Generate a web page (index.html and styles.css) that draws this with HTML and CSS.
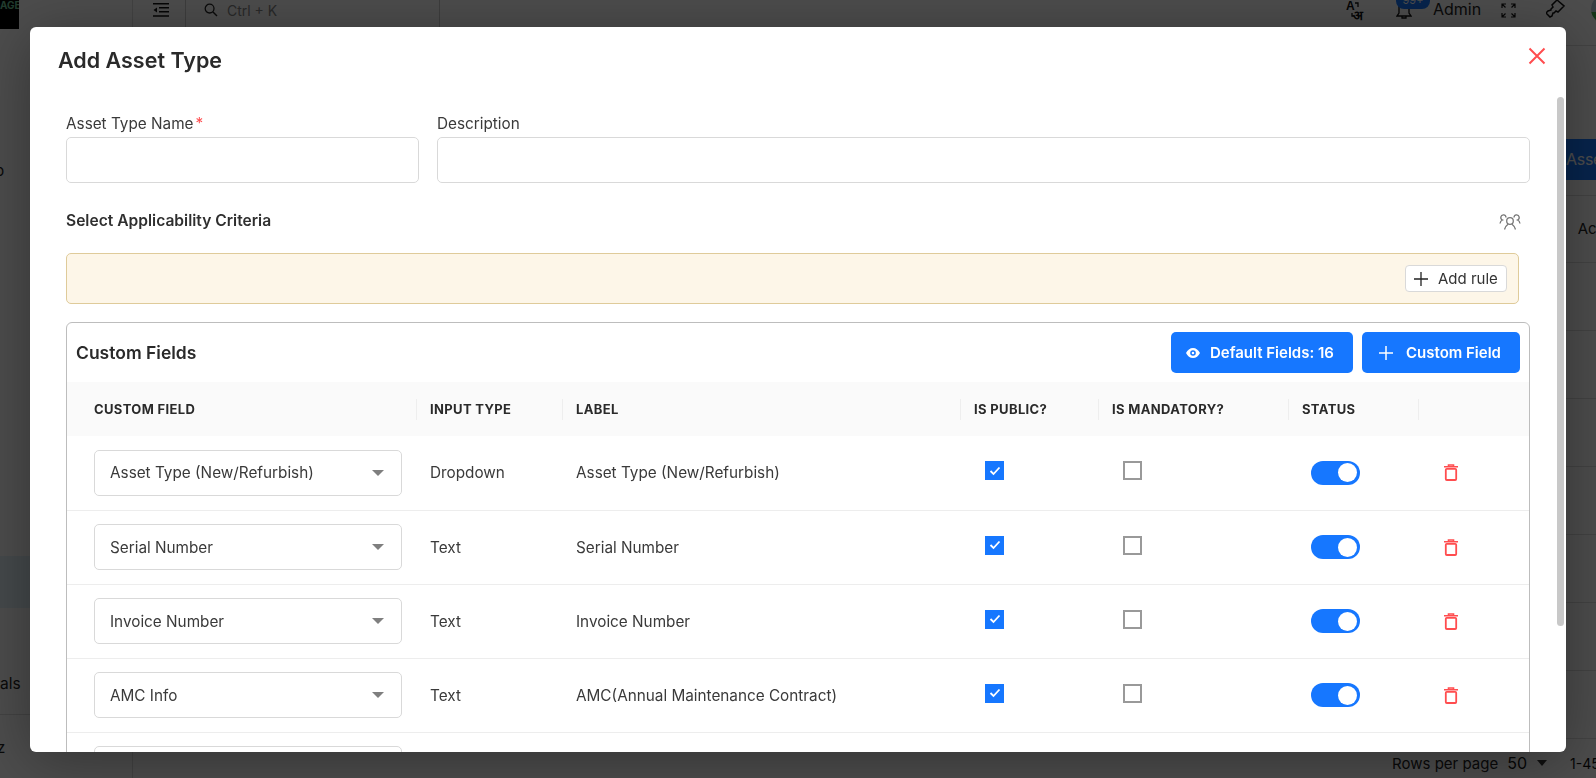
FILE: index.html
```html
<!DOCTYPE html>
<html lang="en">
<head>
<meta charset="utf-8">
<title>Add Asset Type</title>
<link rel="stylesheet" href="styles.css">
</head>
<body>
<div class="app">
  <aside class="sidebar">
    <div class="logo">AGE</div>
    <div class="side-item side-o">p</div>
    <div class="side-active"></div>
    <div class="side-item side-als">als</div>
    <div class="side-item side-z">z</div>
  </aside>
  <div class="main">
    <header class="topbar">
      <div class="menu-cell">
        <svg width="16" height="14" viewBox="0 0 16 14"><path d="M0 .7h16M6 4.7h10M6 8.7h10M0 13h16" stroke="#111" stroke-width="1.4"/><path d="M4 4.400v5L.5 6.900z" fill="#111"/></svg>
      </div>
      <div class="search">
        <svg width="14" height="14" viewBox="0 0 14 14"><circle cx="5.600" cy="5.600" r="4.400" fill="none" stroke="#222" stroke-width="1.300"/><path d="M9 9l4 4" stroke="#222" stroke-width="1.500"/></svg>
        <span>Ctrl + K</span>
      </div>
      <div class="top-right">
        <svg class="ic-lang" width="20" height="21" viewBox="0 0 20 21"><text x="0" y="10" class="lang-a">A</text><text x="7" y="20" class="lang-h">अ</text><path d="M9 3h3v4M6 13v3h2" fill="none" stroke="#111" stroke-width="1.300"/></svg>
        <div class="bell">
          <svg width="16" height="20" viewBox="0 0 16 20"><path d="M3 4v9l-2 3h14l-2-3V4M6 16v2h4v-2" fill="none" stroke="#111" stroke-width="1.300"/></svg>
          <span class="badge">99+</span>
        </div>
        <span class="admin">Admin</span>
        <svg class="ic-full" width="15" height="15" viewBox="0 0 15 15"><path d="M1 5V1h4M10 1h4v4M14 10v4h-4M5 14H1v-4M1 1l3.500 3.500M14 1l-3.500 3.500M14 14l-3.500-3.500M1 14l3.500-3.500" fill="none" stroke="#111" stroke-width="1.200"/></svg>
        <svg class="ic-brush" width="19" height="19" viewBox="0 0 19 19"><path d="M11 0l7 6-6 6-2-1-2 2-1 0-1 3-2 1-4-4 2-2 3-1 0-1 2-2-1-2z" fill="none" stroke="#111" stroke-width="1.500"/></svg>
        <div class="avatar"></div>
      </div>
    </header>
    <div class="content">
      <div class="action-row"><span class="action-btn">Asset</span></div>
      <div class="bg-head">Action</div>
      <div class="bg-row"></div><div class="bg-row"></div><div class="bg-row"></div><div class="bg-row"></div>
      <div class="bg-row"></div><div class="bg-row"></div><div class="bg-row"></div>
    </div>
    <footer class="pager">
      <span class="rows-label">Rows per page</span>
      <span class="rows-val">50</span>
      <i class="pager-caret"></i>
      <span class="rows-range">1-45</span>
    </footer>
  </div>
</div>

<div class="overlay"></div>

<section class="modal">
  <div class="modal-head">
    <h1 class="modal-title">Add Asset Type</h1>
    <svg class="close" width="18" height="18" viewBox="0 0 18 18"><path d="M1.500 1.500l15 15M16.500 1.500l-15 15" stroke="#ff4d4f" stroke-width="2" fill="none"/></svg>
  </div>
  <div class="modal-body">
    <div class="field-row">
      <div class="field field-name">
        <label class="field-label">Asset Type Name<span class="req">*</span></label>
        <div class="input"></div>
      </div>
      <div class="field field-desc">
        <label class="field-label">Description</label>
        <div class="input"></div>
      </div>
    </div>
    <div class="criteria-head">
      <span class="criteria-title">Select Applicability Criteria</span>
      <svg class="people" width="22" height="18" viewBox="0 0 22 18" fill="none" stroke="#777" stroke-width="1.300"><circle cx="11" cy="8" r="3.300"/><path d="M5.500 16.500c.8-3 2.500-4.500 3.500-5.200M16.500 16.500c-.8-3-2.500-4.500-3.500-5.200"/><path d="M1 10.500c.3-2 1.300-3 2.500-3.500a2.600 2.600 0 1 1 3.500-2.500M21 10.500c-.3-2-1.300-3-2.500-3.500a2.600 2.600 0 1 0-3.500-2.500"/></svg>
    </div>
    <div class="rule-box">
      <button class="add-rule" type="button">
        <svg width="14" height="14" viewBox="0 0 14 14"><path d="M7 0v14M0 7h14" stroke="#222" stroke-width="1.300"/></svg>
        <span>Add rule</span>
      </button>
    </div>
    <div class="cf-card">
      <div class="cf-head">
        <h2 class="cf-title">Custom Fields</h2>
        <div class="cf-actions">
          <button class="btn btn-default" type="button">
            <svg width="14" height="10" viewBox="0 0 14 10"><path fill-rule="evenodd" d="M7 0c3 0 5.500 2 7 5-1.500 3-4 5-7 5S1.500 8 0 5c1.500-3 4-5 7-5zm0 2.200a2.800 2.800 0 1 0 0 5.600 2.800 2.800 0 0 0 0-5.600zM7 3.700a1.300 1.300 0 1 1 0 2.600 1.300 1.300 0 0 1 0-2.600z" fill="#fff"/></svg>
            <span>Default Fields: 16</span>
          </button>
          <button class="btn btn-custom" type="button">
            <svg width="14" height="14" viewBox="0 0 14 14"><path d="M7 0v14M0 7h14" stroke="#fff" stroke-width="1.500"/></svg>
            <span>Custom Field</span>
          </button>
        </div>
      </div>
      <table class="cf-table">
        <colgroup>
          <col class="c1"><col class="c2"><col class="c3"><col class="c4"><col class="c5"><col class="c6"><col class="c7">
        </colgroup>
        <thead>
          <tr>
            <th class="th-first"><div>Custom Field</div></th>
            <th><div>Input Type</div></th>
            <th><div>Label</div></th>
            <th><div>Is Public?</div></th>
            <th><div>Is Mandatory?</div></th>
            <th><div>Status</div></th>
            <th><div>&nbsp;</div></th>
          </tr>
        </thead>
        <tbody>
          <tr>
            <td class="td-select"><div class="select"><span>Asset Type (New/Refurbish)</span><i class="caret"></i></div></td>
            <td>Dropdown</td>
            <td>Asset Type (New/Refurbish)</td>
            <td class="td-check"><span class="check on"><svg width="12" height="10" viewBox="0 0 12 10"><path d="M1.500 5l3 3 6-6.500" fill="none" stroke="#fff" stroke-width="1.800"/></svg></span></td>
            <td class="td-check"><span class="check"></span></td>
            <td class="td-toggle"><span class="toggle"><i class="thumb"></i></span></td>
            <td class="td-trash"><svg width="14" height="17" viewBox="0 0 14 17"><path d="M0 2.800h14M4.500 2.500V1h5v1.500" fill="none" stroke="#ff4d4f" stroke-width="1.600"/><rect x="1.800" y="4.800" width="10.400" height="11.200" rx="1" fill="none" stroke="#ff4d4f" stroke-width="1.800"/></svg></td>
          </tr>
          <tr>
            <td class="td-select"><div class="select"><span>Serial Number</span><i class="caret"></i></div></td>
            <td>Text</td>
            <td>Serial Number</td>
            <td class="td-check"><span class="check on"><svg width="12" height="10" viewBox="0 0 12 10"><path d="M1.500 5l3 3 6-6.500" fill="none" stroke="#fff" stroke-width="1.800"/></svg></span></td>
            <td class="td-check"><span class="check"></span></td>
            <td class="td-toggle"><span class="toggle"><i class="thumb"></i></span></td>
            <td class="td-trash"><svg width="14" height="17" viewBox="0 0 14 17"><path d="M0 2.800h14M4.500 2.500V1h5v1.500" fill="none" stroke="#ff4d4f" stroke-width="1.600"/><rect x="1.800" y="4.800" width="10.400" height="11.200" rx="1" fill="none" stroke="#ff4d4f" stroke-width="1.800"/></svg></td>
          </tr>
          <tr>
            <td class="td-select"><div class="select"><span>Invoice Number</span><i class="caret"></i></div></td>
            <td>Text</td>
            <td>Invoice Number</td>
            <td class="td-check"><span class="check on"><svg width="12" height="10" viewBox="0 0 12 10"><path d="M1.500 5l3 3 6-6.500" fill="none" stroke="#fff" stroke-width="1.800"/></svg></span></td>
            <td class="td-check"><span class="check"></span></td>
            <td class="td-toggle"><span class="toggle"><i class="thumb"></i></span></td>
            <td class="td-trash"><svg width="14" height="17" viewBox="0 0 14 17"><path d="M0 2.800h14M4.500 2.500V1h5v1.500" fill="none" stroke="#ff4d4f" stroke-width="1.600"/><rect x="1.800" y="4.800" width="10.400" height="11.200" rx="1" fill="none" stroke="#ff4d4f" stroke-width="1.800"/></svg></td>
          </tr>
          <tr>
            <td class="td-select"><div class="select"><span>AMC Info</span><i class="caret"></i></div></td>
            <td>Text</td>
            <td>AMC(Annual Maintenance Contract)</td>
            <td class="td-check"><span class="check on"><svg width="12" height="10" viewBox="0 0 12 10"><path d="M1.500 5l3 3 6-6.500" fill="none" stroke="#fff" stroke-width="1.800"/></svg></span></td>
            <td class="td-check"><span class="check"></span></td>
            <td class="td-toggle"><span class="toggle"><i class="thumb"></i></span></td>
            <td class="td-trash"><svg width="14" height="17" viewBox="0 0 14 17"><path d="M0 2.800h14M4.500 2.500V1h5v1.500" fill="none" stroke="#ff4d4f" stroke-width="1.600"/><rect x="1.800" y="4.800" width="10.400" height="11.200" rx="1" fill="none" stroke="#ff4d4f" stroke-width="1.800"/></svg></td>
          </tr>
          <tr>
            <td class="td-select"><div class="select"></div></td>
            <td></td><td></td><td></td><td></td><td></td><td></td>
          </tr>
        </tbody>
      </table>
    </div>
  </div>
  <div class="scroll-thumb"></div>
</section>
</body>
</html>
```
FILE: styles.css
```css
* { box-sizing: border-box; }
html, body { margin: 0; height: 100%; overflow: hidden; }
body { font-family: Inter, "Noto Sans", "Liberation Sans", sans-serif; color: #333; background: #fff; }

/* page behind the dialog */
.app { display: flex; height: 778px; }
.sidebar { width: 133px; flex: none; display: flex; flex-direction: column; border-right: 1px solid #ddd; overflow: hidden; }
.logo { width: 19px; height: 29px; background: #000; color: #6fc79a; font-size: 10px; font-weight: 700; line-height: 11px; overflow: hidden; white-space: nowrap; }
.side-item { font-size: 15px; line-height: 18px; color: #222; white-space: nowrap; }
.side-o { margin-top: 133px; margin-left: -5px; }
.side-active { height: 52px; margin-top: 376px; background: #e4f2f9; }
.side-als { margin-top: 67px; font-size: 15.5px; padding-bottom: 21px; border-bottom: 1px solid #ddd; }
.side-z { margin-top: 24px; margin-left: -3px; }
.main { flex: 1; min-width: 0; display: flex; flex-direction: column; }
.topbar { height: 46px; flex: none; display: flex; align-items: flex-start; border-bottom: 1px solid #ddd; }
.menu-cell { flex: none; width: 53px; height: 28px; padding: 3px 0 0 20px; border-right: 1px solid #ccc; line-height: 0; }
.search { flex: none; width: 254px; height: 28px; display: flex; gap: 9px; padding: 3px 0 0 18px; border-right: 1px solid #ccc; border-bottom: 1px solid #ccc; font-size: 14px; color: #888; line-height: 15px; }
.top-right { flex: 1; min-width: 0; display: flex; align-items: flex-start; padding-left: 906px; position: relative; }
.ic-lang { flex: none; }
.lang-a { font: 600 12px "Liberation Sans", sans-serif; fill: #111; }
.lang-h { font: 700 13px "Noto Sans CJK SC", "DejaVu Sans", sans-serif; fill: #111; }
.bell { margin-left: 30px; position: relative; width: 16px; height: 20px; flex: none; }
.badge { position: absolute; left: 0; top: -8px; width: 34px; height: 17px; border-radius: 8px; background: #1677ff; color: #fff; font-size: 11px; line-height: 16px; text-align: center; }
.admin { margin-left: 21px; font-size: 16px; line-height: 18px; color: #222; }
.ic-full { margin: 3px 0 0 20px; flex: none; }
.ic-brush { margin: 0 0 0 30px; flex: none; }
.avatar { flex: none; margin: -6px 0 0 26px; width: 30px; height: 30px; border-radius: 50%; background: linear-gradient(#bcd0dc 60%, #4caf50 60%); }
.content { flex: 1; padding-top: 93px; min-height: 0; overflow: hidden; }
.action-row { height: 41px; display: flex; justify-content: flex-end; }
.action-btn { width: 62px; margin-right: -30px; background: #1677ff; color: #fff; font-size: 16px; line-height: 41px; padding-left: 2px; letter-spacing: -.3px; }
.bg-head { margin-top: 15px; height: 68px; line-height: 65px; text-align: right; font-size: 15px; color: #222; border-top: 1px solid #ddd; border-bottom: 1px solid #ddd; white-space: nowrap; overflow: hidden; margin-right: -27px; }
.bg-row { height: 68px; border-bottom: 1px solid #ddd; }
.pager { height: 28px; flex: none; display: flex; align-items: center; justify-content: flex-end; overflow: hidden; padding-bottom: 2px; }
.rows-label { font-size: 15px; color: #222; }
.rows-val { margin-left: 9px; font-size: 16px; color: #111; }
.pager-caret { margin-left: 10px; width: 0; height: 0; border: 5px solid transparent; border-top: 6px solid #333; border-bottom: 0; }
.rows-range { margin-left: 23px; width: 26px; font-size: 14px; color: #111; white-space: nowrap; overflow: hidden; }

.overlay { position: fixed; inset: 0; background: rgba(0, 0, 0, .7); }

/* dialog */
.modal { position: fixed; left: 30px; top: 27px; width: 1536px; height: 725px; background: #fff; border-radius: 6px; overflow: hidden; box-shadow: 0 8px 60px rgba(0, 0, 0, .35); }
.modal-head { display: flex; justify-content: space-between; height: 86px; padding: 20px 20px 0 28px; }
.modal-title { margin: 0; font-size: 21.5px; line-height: 26px; font-weight: 600; color: #2a2a2a; }
.close { margin-top: 0; }
.modal-body { padding: 0 36px; }
.field-row { display: flex; gap: 18px; }
.field-name { width: 353px; flex: none; }
.field-desc { flex: 1; }
.field-label { display: block; font-size: 15.3px; line-height: 18px; color: #3a3a3a; margin: 2px 0 4px; }
.req { color: #ff4d4f; margin-left: 2px; }
.input { height: 46px; border: 1px solid #d9d9d9; border-radius: 5px; background: #fff; }
.criteria-head { display: flex; justify-content: space-between; align-items: center; margin-top: 26px; height: 22px; padding-right: 9px; }
.criteria-title { font-size: 15.6px; font-weight: 600; color: #2f2f2f; }
.people { margin-top: 3px; }
.rule-box { margin-top: 22px; width: 1453px; height: 51px; background: #fdf6e8; border: 1px solid #dfcb9a; border-radius: 5px; display: flex; justify-content: flex-end; align-items: center; padding-right: 11px; }
.add-rule { height: 27px; width: 102px; padding: 0 8px; background: #fff; border: 1px solid #d9d9d9; border-radius: 4px; display: flex; align-items: center; gap: 10px; font: inherit; font-size: 15px; color: #333; white-space: nowrap; }
.cf-card { margin-top: 18px; border: 1px solid #bdbdbd; border-radius: 6px 6px 0 0; height: 500px; overflow: hidden; }
.cf-head { height: 59px; padding: 9px 9px 0 9px; display: flex; justify-content: space-between; align-items: flex-start; }
.cf-title { margin: 0; font-size: 17.5px; line-height: 41px; font-weight: 600; color: #2a2a2a; }
.cf-actions { display: flex; gap: 9px; }
.btn { height: 41px; border: 0; border-radius: 5px; background: #1677ff; color: #fff; font: inherit; font-size: 15px; font-weight: 600; display: flex; align-items: center; padding: 0; }
.btn-default { width: 182px; padding-left: 15px; gap: 10px; }
.btn-custom { width: 158px; padding-left: 17px; gap: 13px; }
.cf-table { width: 1462px; table-layout: fixed; border-collapse: collapse; }
.c1 { width: 349px; } .c2 { width: 146px; } .c3 { width: 398px; } .c4 { width: 138px; } .c5 { width: 190px; } .c6 { width: 130px; } .c7 { width: 111px; }
.cf-table thead tr { height: 54px; background: #fafafa; }
.cf-table th { padding: 0; text-align: left; font-size: 13px; font-weight: 700; text-transform: uppercase; color: #2a2a2a; letter-spacing: .35px; }
.cf-table th div { height: 21px; line-height: 21px; padding-left: 13px; border-left: 1px solid #eee; white-space: nowrap; }
.cf-table th.th-first div { border-left: 0; padding-left: 27px; }
.cf-table tbody tr { height: 74px; border-bottom: 1px solid #ededed; }
.cf-table td { padding: 0 0 0 14px; font-size: 15.3px; color: #3a3a3a; white-space: nowrap; }
.cf-table td.td-select { padding-left: 27px; }
.select { width: 308px; height: 46px; border: 1px solid #d9d9d9; border-radius: 5px; display: flex; align-items: center; justify-content: space-between; padding: 0 17px 0 15px; color: #3a3a3a; }
.caret { width: 0; height: 0; border: 6px solid transparent; border-top: 6px solid #7f7f7f; border-bottom: 0; }
.cf-table td.td-check { padding-left: 25px; line-height: 0; }
.check { display: block; width: 19px; height: 19px; margin-bottom: 4px; border: 2px solid #999; background: #fff; }
.check.on { background: #1677ff; border: 0; display: flex; align-items: center; justify-content: center; }
.cf-table td.td-toggle { padding-left: 23px; line-height: 0; }
.toggle { display: flex; align-items: center; justify-content: flex-end; width: 49px; height: 24px; border-radius: 12px; background: #1677ff; padding-right: 3px; }
.thumb { width: 19px; height: 19px; border-radius: 50%; background: #fff; }
.cf-table td.td-trash { padding-left: 26px; line-height: 0; }
.scroll-thumb { position: absolute; left: 1527px; top: 70px; width: 7px; height: 529px; border-radius: 4px; background: #c8c8c8; }
```
